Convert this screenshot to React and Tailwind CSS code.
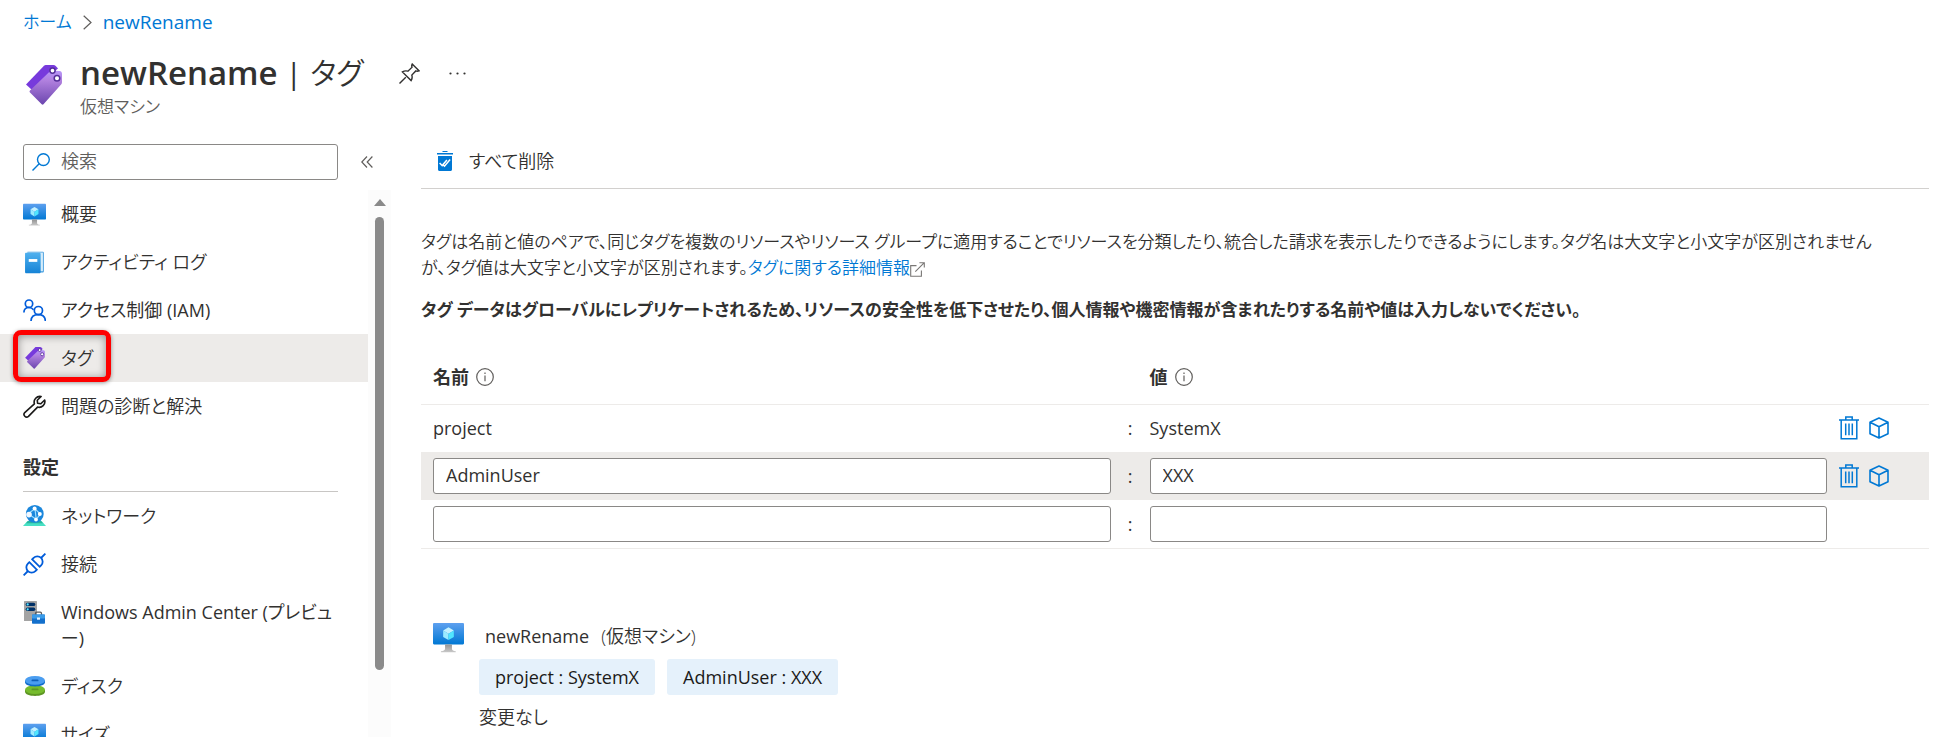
import { useState } from "react";

function VmIcon({ className }) {
  return (
    <svg viewBox="0 0 18 18" className={className} aria-hidden="true">
      <defs>
        <linearGradient id="vmScreen" x1="0" y1="0" x2="0" y2="1">
          <stop offset="0" stopColor="#5ea0ef" />
          <stop offset="1" stopColor="#0078d4" />
        </linearGradient>
        <linearGradient id="vmStand" x1="0" y1="0" x2="0" y2="1">
          <stop offset="0" stopColor="#949494" />
          <stop offset="1" stopColor="#c9c9c9" />
        </linearGradient>
      </defs>
      <rect y="0.6" width="18" height="12.4" rx="0.6" fill="url(#vmScreen)" />
      <path d="M7 13h4v2.6c0 .8.9 1.400 2.200 1.400v.6H4.600V17C6 17 7 16.300 7 15.600z" fill="url(#vmStand)" />
      <path d="M9 3.100l3.100 1.800L9 6.800 5.900 4.900z" fill="#c3f1ff" />
      <path d="M5.900 4.900L9 6.800v3.700L5.900 8.700z" fill="#9cebff" />
      <path d="M12.100 4.900L9 6.800v3.700l3.100-1.800z" fill="#50e6ff" />
    </svg>
  );
}

function LogIcon({ className }) {
  return (
    <svg viewBox="0 0 18 18" className={className} aria-hidden="true">
      <defs>
        <linearGradient id="logCover" x1="0" y1="0" x2="0" y2="1">
          <stop offset="0" stopColor="#4fb0ee" />
          <stop offset="1" stopColor="#1583d6" />
        </linearGradient>
      </defs>
      <path d="M3.500.6h11.800c.6 0 1 .4 1 1v14.200c0 .6-.4 1-1 1H3.500z" fill="#3f9ade" />
      <path d="M3.400 1.200h12.200v14.600h-2z" fill="#d5ecfa" />
      <path d="M1.600 2.200c0-.5.4-.8.900-.8h10.300c.6 0 1 .4 1 1v14c0 .6-.4 1-1 1H2.600c-.6 0-1-.4-1-1z" fill="url(#logCover)" />
      <rect x="4.500" y="6.300" width="6.700" height="2.200" fill="#fff" />
    </svg>
  );
}

function PeopleIcon({ className }) {
  return (
    <svg viewBox="0 0 23 22" className={className} fill="none" stroke="#015cda" strokeWidth="1.700" aria-hidden="true">
      <circle cx="6" cy="4.700" r="3.700" />
      <circle cx="15.400" cy="11.600" r="4.100" />
      <path d="M.9 13.500C1 10.500 3 8.500 6 8.500c1.900 0 3.500.8 4.500 2.300" />
      <path d="M8 22c.2-4 3.200-6.300 7.200-6.300s7 2.300 7.200 6.300" />
    </svg>
  );
}

function TagIcon({ className }) {
  return (
    <svg viewBox="0 0 36 40" className={className} aria-hidden="true">
      <defs>
        <linearGradient id="tagFront" x1="0" y1="0" x2="0" y2="1">
          <stop offset="0" stopColor="#b796f9" />
          <stop offset=".3" stopColor="#b080de" />
          <stop offset="1" stopColor="#6b45ae" />
        </linearGradient>
      </defs>
      <path d="M0 19.500L18 .8C18.500.3 19 0 19.800 0h7.600c1 0 1.700.4 2.300 1L32 3.500 6 25z" fill="#773adc" />
      <path d="M4 25.500L24 6.200c.6-.6 1.300-.9 2.200-.8l7.300.7c1.500.2 2.500 1.200 2.500 2.700v8.400c0 .9-.3 1.600-.9 2.200L17.500 39.300c-.6.6-1.200.6-1.800 0L4 27.500c-.6-.7-.6-1.300 0-2z" fill="url(#tagFront)" />
      <circle cx="26.500" cy="5.600" r="2.600" fill="#fff" stroke="#552f99" strokeWidth="1.500" />
      <circle cx="31" cy="13.200" r="2.800" fill="#fff" stroke="#552f99" strokeWidth="1.500" />
    </svg>
  );
}

function WrenchIcon({ className }) {
  return (
    <svg viewBox="0 0 24 24" className={className} fill="none" stroke="#1b1a19" strokeWidth="1.700" strokeLinejoin="round" aria-hidden="true">
      <path d="M18.900 1.600a6 6 0 0 0-7 7.600L1.800 18.300a2.800 2.800 0 0 0 3.900 4L15.200 12.600a6 6 0 0 0 7.400-7.400L18.600 9.100 15.200 8.600 14.900 5.500z" />
    </svg>
  );
}

function NetworkIcon({ className }) {
  return (
    <svg viewBox="0 0 23 22" className={className} aria-hidden="true">
      <path d="M4.500 16h14l4.500 5H0z" fill="#47e0c4" />
      <path d="M5 16h13l2 2.200H3z" fill="#2bb59c" />
      <circle cx="11.800" cy="8.900" r="8.900" fill="#1a86dc" />
      <path d="M5 8.700L12 3.800l5.500 5.400-4.300 5M12 3.800l1.200 10.400M5 8.700l8.200 5.500" stroke="#9cdcff" strokeWidth="1.200" fill="none" />
      <circle cx="11.600" cy="3.500" r="2" fill="#fff" />
      <circle cx="6" cy="9.600" r="2.800" fill="#f2f8ff" />
      <circle cx="16.800" cy="9" r="2" fill="#fff" />
      <circle cx="13" cy="14.600" r="1.900" fill="#fff" />
    </svg>
  );
}

function ConnectIcon({ className }) {
  return (
    <svg viewBox="0 0 23 23" className={className} fill="none" stroke="#015cda" strokeWidth="1.800" aria-hidden="true">
      <path d="M.6 22.400L5 18M22.400.6L18 5" />
      <path d="M6.300 9.200l7.500 7.500-1.400 1.400a5.200 5.200 0 0 1-7.500-7.500z" />
      <path d="M9.200 6.300l7.500 7.500 1.400-1.400a5.200 5.200 0 0 0-7.500-7.500z" />
    </svg>
  );
}

function AdminCenterIcon({ className }) {
  return (
    <svg viewBox="0 0 21 23" className={className} aria-hidden="true">
      <rect x="0" y="0" width="13" height="20" rx=".6" fill="#a3a3a3" />
      <rect x="1.700" y="1.700" width="9.600" height="3.400" rx="1.700" fill="#003067" />
      <rect x="1.700" y="6.600" width="9.600" height="3.400" rx="1.700" fill="#003067" />
      <circle cx="3.700" cy="3.400" r="1.100" fill="#50e6ff" />
      <circle cx="3.700" cy="8.300" r="1.100" fill="#50e6ff" />
      <path d="M11.500 14v-1.500c0-.8.500-1.300 1.300-1.300h3.400c.8 0 1.300.5 1.300 1.300V14" stroke="#5b5b5b" strokeWidth="1.300" fill="none" />
      <rect x="8" y="13.500" width="13" height="9.200" rx=".8" fill="#1470cc" />
      <rect x="8" y="13.500" width="13" height="4" rx=".8" fill="#3a9be8" />
      <rect x="13" y="16.500" width="3" height="2.200" fill="#e8f5ff" />
    </svg>
  );
}

function DiskIcon({ className }) {
  return (
    <svg viewBox="0 0 20 20" className={className} aria-hidden="true">
      <path d="M0 14v1.800C0 18.200 4.500 20 10 20s10-1.800 10-4.200V14z" fill="#5e9624" />
      <ellipse cx="10" cy="13.600" rx="10" ry="4.400" fill="#76bc2d" />
      <rect x="6.500" y="12.500" width="7" height="1.800" rx=".9" fill="#5e9624" />
      <path d="M0 4.500v1.800c0 2.400 4.500 4.200 10 4.200s10-1.800 10-4.200V4.500z" fill="#0f6cc9" />
      <ellipse cx="10" cy="4.400" rx="10" ry="4.400" fill="#4a9df0" />
      <rect x="6.500" y="3.500" width="7" height="1.800" rx=".9" fill="#0f5fb8" />
    </svg>
  );
}

function PinIcon({ className }) {
  return (
    <svg viewBox="0 0 21 21" className={className} fill="none" stroke="#323130" strokeWidth="1.400" strokeLinejoin="miter" aria-hidden="true">
      <path d="M.5 20.500L6.800 14.200" />
      <path d="M13.200 1l6.800 6.800c-1.400.6-2.300.5-3.200.1l-4 4.200c.7 2 .4 3.700-.7 5.500L3.400 8.900c1.800-1.100 3.500-1.400 5.500-.7l4.200-4c-.5-1-.5-2.200.1-3.200z" />
    </svg>
  );
}

function SearchIcon({ className }) {
  return (
    <svg viewBox="0 0 18 18" className={className} fill="none" stroke="#0078d4" strokeWidth="1.400" aria-hidden="true">
      <circle cx="11.400" cy="6.600" r="5.900" />
      <path d="M7.200 10.800L.5 17.500" />
    </svg>
  );
}

function CollapseIcon({ className }) {
  return (
    <svg viewBox="0 0 12 12" className={className} fill="none" stroke="#605e5c" strokeWidth="1.200" aria-hidden="true">
      <path d="M6 .5L.8 6 6 11.500M11.400.5L6.200 6l5.200 5.500" />
    </svg>
  );
}

function DeleteAllIcon({ className }) {
  return (
    <svg viewBox="0 0 16 20" className={className} aria-hidden="true">
      <path d="M5.500 0h5v1H5.500zM0 2h16v1.600H0z" fill="#0078d4" />
      <path d="M1 5h14v13.500c0 .8-.6 1.500-1.500 1.500h-11C1.600 20 1 19.300 1 18.500z" fill="#0078d4" />
      <path d="M2.600 12l2.600 2.600 4.700-5.600M6.300 14l1.200 1.200 5.600-6.700" fill="none" stroke="#fff" strokeWidth="1.500" />
    </svg>
  );
}

function ExternalIcon({ className }) {
  return (
    <svg viewBox="0 0 15 15" className={className} fill="none" stroke="#797775" strokeWidth="1.100" aria-hidden="true">
      <path d="M6.500 3.600H.7v10.700h10.700V8.500M9.400.7h4.900v4.900M14.300.7L5.300 9.700" />
    </svg>
  );
}

function InfoIcon({ className }) {
  return (
    <svg viewBox="0 0 18 18" className={className} fill="none" stroke="#605e5c" strokeWidth="1.200" aria-hidden="true">
      <circle cx="9" cy="9" r="8.300" />
      <path d="M9 7.500v5.700M9 4.600v1.500" />
    </svg>
  );
}

function TrashIcon({ className }) {
  return (
    <svg viewBox="0 0 20 24" className={className} fill="none" stroke="#0078d4" strokeWidth="1.500" aria-hidden="true">
      <path d="M0 4h20M6.800 3.800V1h6.400v2.800M2.200 4v18.800h15.600V4M6.700 7.500v11.800M10 7.500v11.800M13.300 7.500v11.800" />
    </svg>
  );
}

function CubeIcon({ className }) {
  return (
    <svg viewBox="0 0 20 22" className={className} fill="none" stroke="#0078d4" strokeWidth="1.600" strokeLinejoin="round" aria-hidden="true">
      <path d="M10 1l9 4.300v11.400L10 21l-9-4.300V5.300zM1 5.300l9 4.500 9-4.500M10 9.800V21" />
    </svg>
  );
}

function NavItem({ icon: Icon, iconClass, label, labelClass = "font-[350]", active }) {
  return (
    <li className={active ? "relative bg-[#edebe9]" : ""}>
      <a
        href="#"
        aria-current={active ? "page" : undefined}
        className="flex min-h-12 items-start gap-[15px] py-[11px] pr-7 pl-[23px]"
      >
        <span className="flex h-[26px] w-[23px] shrink-0 items-center justify-center">
          <Icon className={iconClass} />
        </span>
        <span className={labelClass}>{label}</span>
      </a>
      {active && (
        <span className="pointer-events-none absolute -top-1 left-[13px] h-[52px] w-[98px] rounded-lg border-[5px] border-[#fe0000] shadow-[0_1px_4px_#0006,inset_0_1px_8px_#0006]" />
      )}
    </li>
  );
}

function RowActions() {
  return (
    <div className="flex items-center gap-[10px] pl-3">
      <button type="button" aria-label="削除">
        <TrashIcon className="h-6 w-5" />
      </button>
      <button type="button" aria-label="リソース">
        <CubeIcon className="h-[22px] w-5" />
      </button>
    </div>
  );
}

const general = [
  { icon: VmIcon, iconClass: "size-[23px]", label: "概要" },
  { icon: LogIcon, iconClass: "size-[23px]", label: "アクティビティ ログ" },
  { icon: PeopleIcon, iconClass: "h-[22px] w-[23px]", label: "アクセス制御 (IAM)", labelClass: "font-normal" },
  { icon: TagIcon, iconClass: "h-[22px] w-5", label: "タグ", active: true },
  { icon: WrenchIcon, iconClass: "size-[23px]", label: "問題の診断と解決" },
];

const settings = [
  { icon: NetworkIcon, iconClass: "h-[22px] w-[23px]", label: "ネットワーク" },
  { icon: ConnectIcon, iconClass: "size-[23px]", label: "接続" },
  {
    icon: AdminCenterIcon,
    iconClass: "h-[23px] w-[21px]",
    label: "Windows Admin Center (プレビュー)",
    labelClass: "font-normal",
  },
  { icon: DiskIcon, iconClass: "size-5", label: "ディスク" },
  { icon: VmIcon, iconClass: "size-[23px]", label: "サイズ" },
];

const inputClass =
  "block h-9 w-full rounded-[3px] border border-[#8a8886] bg-white px-3 pb-0.5 outline-none";

export default function App() {
  const [name, setName] = useState("AdminUser");
  const [value, setValue] = useState("XXX");
  const [newName, setNewName] = useState("");
  const [newValue, setNewValue] = useState("");

  return (
    <div className="flex h-screen flex-col overflow-hidden bg-white font-['Open_Sans','Noto_Sans_CJK_JP',sans-serif] text-[18px] leading-[26px] text-[#323130] [font-feature-settings:'palt']">
      <header>
        <nav aria-label="階層" className="flex items-center gap-[11px] px-[23px] pt-[9px] text-[#0078d4]">
          <a href="#" className="text-[17px] font-[350]">ホーム</a>
          <svg viewBox="0 0 9 15" className="h-[15px] w-[9px]" fill="none" stroke="#605e5c" strokeWidth="1.200" aria-hidden="true">
            <path d="M.7.7l7.300 6.800-7.300 6.800" />
          </svg>
          <a href="#" className="text-[19px]">newRename</a>
        </nav>
        <div className="flex items-start px-[26px] pt-[17px]">
          <TagIcon className="mt-[13px] h-10 w-9 shrink-0" />
          <div className="pl-[18px]">
            <h1 className="flex items-center gap-2 text-[30px] leading-[42px]">
              <span className="text-[33px] font-semibold">newRename</span>
              <span>|</span>
              <span className="font-[350]">タグ</span>
            </h1>
            <p className="text-[17px] leading-[26px] font-[350] text-[#605e5c]">仮想マシン</p>
          </div>
          <button type="button" aria-label="ピン留め" className="mt-[11px] ml-9">
            <PinIcon className="size-[21px]" />
          </button>
          <button type="button" aria-label="その他" className="mt-5 ml-[29px]">
            <svg viewBox="0 0 17 3" className="h-[3px] w-[17px]" fill="#323130" aria-hidden="true">
              <circle cx="1.500" cy="1.500" r="1.100" />
              <circle cx="8.500" cy="1.500" r="1.100" />
              <circle cx="15.500" cy="1.500" r="1.100" />
            </svg>
          </button>
        </div>
      </header>

      <div className="flex min-h-0 flex-1 pt-6">
        <aside className="flex w-[391px] shrink-0 flex-col">
          <div className="flex items-center gap-[23px] pl-[23px]">
            <label className="flex h-9 w-[315px] items-center gap-[11px] rounded-[3px] border border-[#8a8886] px-2">
              <SearchIcon className="size-[18px] shrink-0" />
              <input
                type="text"
                aria-label="検索"
                placeholder="検索"
                className="w-full min-w-0 pb-0.5 font-[350] outline-none placeholder:text-[#605e5c]"
              />
            </label>
            <button type="button" aria-label="折りたたむ">
              <CollapseIcon className="size-3" />
            </button>
          </div>

          <div className="mt-[10px] flex min-h-0 flex-1">
            <nav aria-label="メニュー" className="w-[368px] overflow-hidden">
              <ul>
                {general.map((item) => (
                  <NavItem key={item.label} {...item} />
                ))}
              </ul>
              <h2 className="mr-[30px] ml-[23px] border-b border-[#c8c6c4] pt-6 pb-[11px] font-semibold">設定</h2>
              <ul>
                {settings.map((item) => (
                  <NavItem key={item.label} {...item} />
                ))}
              </ul>
            </nav>
            <div className="flex w-[23px] flex-col items-center bg-[#fcfcfc] pt-[9px]" aria-hidden="true">
              <svg viewBox="0 0 12 7" className="h-[7px] w-3" fill="#8a8a8a">
                <path d="M6 0l6 7H0z" />
              </svg>
              <div className="mt-[11px] h-[453px] w-[9px] rounded-full bg-[#8a8a8a]" />
            </div>
          </div>
        </aside>

        <main className="min-w-0 flex-1 pr-[18px] pl-[30px]">
          <div className="border-b border-[#d2d0ce] pb-[10px] pl-4">
            <button type="button" className="flex h-[34px] items-center gap-4 font-[350]">
              <DeleteAllIcon className="h-5 w-4" />
              すべて削除
            </button>
          </div>

          <p className="pt-10 text-[17px] font-[350]">
            タグは名前と値のペアで、同じタグを複数のリソースやリソース グループに適用することでリソースを分類したり、統合した請求を表示したりできるようにします。タグ名は大文字と小文字が区別されません
            <br />
            が、タグ値は大文字と小文字が区別されます。
            <a href="#" className="text-[#0078d4]">
              タグに関する詳細情報
              <ExternalIcon className="inline size-[15px]" />
            </a>
          </p>
          <p className="pt-4 text-[17px] font-semibold">
            タグ データはグローバルにレプリケートされるため、リソースの安全性を低下させたり、個人情報や機密情報が含まれたりする名前や値は入力しないでください。
          </p>

          <table className="mt-[27px] w-full table-fixed border-b border-[#edebe9] text-left">
            <colgroup>
              <col className="w-3" />
              <col />
              <col className="w-[39px]" />
              <col />
              <col className="w-[102px]" />
            </colgroup>
            <thead>
              <tr className="h-[54px] border-b border-[#edebe9]">
                <th colSpan={2} className="pl-3 font-semibold">
                  <span className="flex items-center gap-[7px]">
                    名前 <InfoIcon className="size-[18px]" />
                  </span>
                </th>
                <th></th>
                <th className="font-semibold">
                  <span className="flex items-center gap-[7px]">
                    値 <InfoIcon className="size-[18px]" />
                  </span>
                </th>
                <th></th>
              </tr>
            </thead>
            <tbody>
              <tr className="h-12">
                <td colSpan={2} className="pl-3">project</td>
                <td className="text-center">:</td>
                <td>SystemX</td>
                <td>
                  <RowActions />
                </td>
              </tr>
              <tr className="h-12 bg-[#edebe9]">
                <td colSpan={2} className="pl-3">
                  <input aria-label="名前" className={inputClass} value={name} onChange={(e) => setName(e.target.value)} />
                </td>
                <td className="text-center">:</td>
                <td>
                  <input aria-label="値" className={inputClass} value={value} onChange={(e) => setValue(e.target.value)} />
                </td>
                <td>
                  <RowActions />
                </td>
              </tr>
              <tr className="h-12">
                <td colSpan={2} className="pl-3">
                  <input aria-label="新しい名前" className={inputClass} value={newName} onChange={(e) => setNewName(e.target.value)} />
                </td>
                <td className="text-center">:</td>
                <td>
                  <input aria-label="新しい値" className={inputClass} value={newValue} onChange={(e) => setNewValue(e.target.value)} />
                </td>
                <td></td>
              </tr>
            </tbody>
          </table>

          <section className="flex gap-[15px] pt-[73px] pl-3">
            <VmIcon className="size-[31px] shrink-0" />
            <div>
              <p className="flex gap-3 pt-px pl-[6px]">
                <span>newRename</span>
                <span className="font-[350]">(仮想マシン)</span>
              </p>
              <ul className="flex gap-3 pt-[10px]">
                <li className="rounded-[3px] bg-[#e5f1fb] px-4 py-[5px] text-[#1b1a19]">project : SystemX</li>
                <li className="rounded-[3px] bg-[#e5f1fb] px-4 py-[5px] text-[#1b1a19]">AdminUser : XXX</li>
              </ul>
              <p className="pt-[9px] font-[350]">変更なし</p>
            </div>
          </section>
        </main>
      </div>
    </div>
  );
}
